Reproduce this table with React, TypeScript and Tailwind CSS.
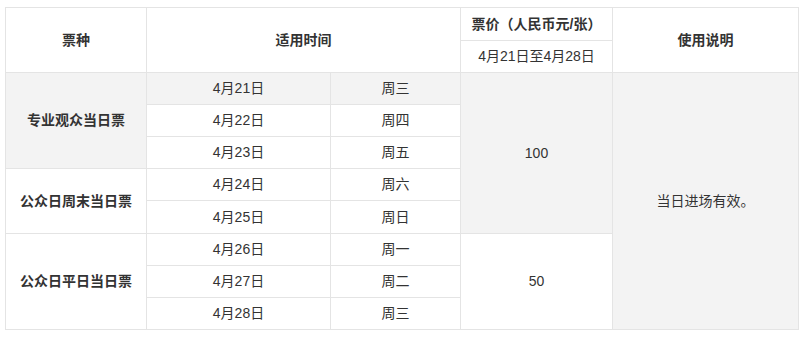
const border = 'border border-[#e4e4e4]';

const cell = `${border} text-center align-middle text-[14px] text-[#333] font-normal`;
const head = `${border} text-center align-middle text-[14px] text-[#333] font-bold`;

const rows = [
  { date: '4月21日', day: '周三' },
  { date: '4月22日', day: '周四' },
  { date: '4月23日', day: '周五' },
  { date: '4月24日', day: '周六' },
  { date: '4月25日', day: '周日' },
  { date: '4月26日', day: '周一' },
  { date: '4月27日', day: '周二' },
  { date: '4月28日', day: '周三' },
];

export default function App() {
  return (
    <div className="min-h-[337px] w-[803px] bg-white pt-[7px] pl-[5px] font-['Liberation_Sans','Noto_Sans_CJK_SC',sans-serif]">
      <table className="w-[793px] table-fixed border-collapse">
        <colgroup>
          <col className="w-[141px]" />
          <col className="w-[184px]" />
          <col className="w-[130px]" />
          <col className="w-[152px]" />
          <col className="w-[186px]" />
        </colgroup>
        <thead>
          <tr className="h-[33px]">
            <th rowSpan={2} className={head}>票种</th>
            <th rowSpan={2} colSpan={2} className={head}>适用时间</th>
            <th className={head}>票价（人民币元/张）</th>
            <th rowSpan={2} className={head}>使用说明</th>
          </tr>
          <tr className="h-[32px]">
            <td className={cell}>4月21日至4月28日</td>
          </tr>
        </thead>
        <tbody>
          {rows.map((r, i) => (
            <tr
              key={r.date}
              className={i === 0 ? 'h-[32px] bg-[#f3f3f3]' : i === 4 ? 'h-[33px]' : 'h-[32px]'}
            >
              {i === 0 && (
                <td rowSpan={3} className={`${head} bg-[#f3f3f3]`}>专业观众当日票</td>
              )}
              {i === 3 && <td rowSpan={2} className={head}>公众日周末当日票</td>}
              {i === 5 && <td rowSpan={3} className={head}>公众日平日当日票</td>}
              <td className={cell}>{r.date}</td>
              <td className={cell}>{r.day}</td>
              {i === 0 && (
                <td rowSpan={5} className={`${cell} bg-[#f3f3f3]`}>100</td>
              )}
              {i === 5 && <td rowSpan={3} className={`${cell} bg-white`}>50</td>}
              {i === 0 && (
                <td rowSpan={8} className={`${cell} bg-[#f3f3f3]`}>当日进场有效。</td>
              )}
            </tr>
          ))}
        </tbody>
      </table>
    </div>
  );
}
